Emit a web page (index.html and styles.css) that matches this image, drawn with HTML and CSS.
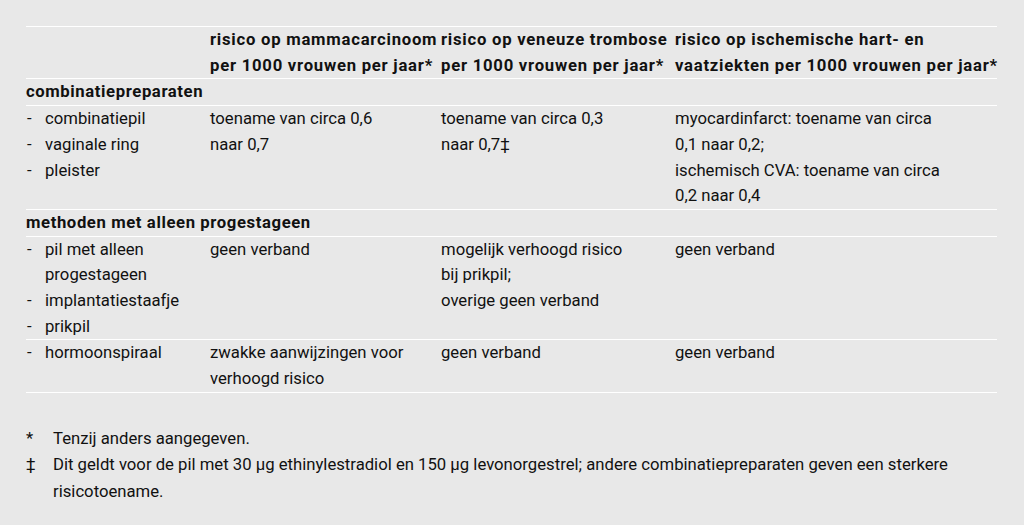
FILE: index.html
```html
<!DOCTYPE html>
<html lang="nl">
<head>
<meta charset="utf-8">
<title>Risico's hormonale anticonceptie</title>
<link rel="stylesheet" href="styles.css">
</head>
<body>
<div class="page">
  <table class="risk">
    <colgroup>
      <col class="c1"><col class="c2"><col class="c3"><col class="c4">
    </colgroup>
    <thead>
      <tr>
        <th></th>
        <th>risico op mammacarcinoom<br>per 1000 vrouwen per jaar*</th>
        <th>risico op veneuze trombose<br>per 1000 vrouwen per jaar*</th>
        <th>risico op ischemische hart- en<br>vaatziekten per 1000 vrouwen per jaar*</th>
      </tr>
    </thead>
    <tbody>
      <tr class="group"><td colspan="4">combinatiepreparaten</td></tr>
      <tr>
        <td>
          <ul class="items">
            <li>combinatiepil</li>
            <li>vaginale ring</li>
            <li>pleister</li>
          </ul>
        </td>
        <td>toename van circa 0,6<br>naar 0,7</td>
        <td>toename van circa 0,3<br>naar 0,7‡</td>
        <td>myocardinfarct: toename van circa<br>0,1 naar 0,2;<br>ischemisch CVA: toename van circa<br>0,2 naar 0,4</td>
      </tr>
      <tr class="group"><td colspan="4">methoden met alleen progestageen</td></tr>
      <tr>
        <td>
          <ul class="items">
            <li>pil met alleen<br>progestageen</li>
            <li>implantatiestaafje</li>
            <li>prikpil</li>
          </ul>
        </td>
        <td>geen verband</td>
        <td>mogelijk verhoogd risico<br>bij prikpil;<br>overige geen verband</td>
        <td>geen verband</td>
      </tr>
      <tr>
        <td>
          <ul class="items">
            <li>hormoonspiraal</li>
          </ul>
        </td>
        <td>zwakke aanwijzingen voor<br>verhoogd risico</td>
        <td>geen verband</td>
        <td>geen verband</td>
      </tr>
    </tbody>
  </table>
  <ul class="notes">
    <li><span class="mark">*</span><span>Tenzij anders aangegeven.</span></li>
    <li><span class="mark">‡</span><span>Dit geldt voor de pil met 30 µg ethinylestradiol en 150 µg levonorgestrel; andere combinatiepreparaten geven een sterkere risicotoename.</span></li>
  </ul>
</div>
</body>
</html>
```

FILE: styles.css
```css
html, body {
  margin: 0;
  padding: 0;
  background: #e8e8e8;
}
body {
  font-family: Roboto, "Liberation Sans", sans-serif;
  font-size: 16.7px;
  color: #111111;
}
.page {
  padding: 26px 26px 0 26px;
  width: 972px;
}
.risk {
  width: 971px;
  border-collapse: collapse;
  table-layout: fixed;
}
.c1 { width: 184px; }
.c2 { width: 231px; }
.c3 { width: 234px; }
.c4 { width: 322px; }
.risk th, .risk td {
  padding: 0;
  text-align: left;
  vertical-align: top;
  line-height: 25.7px;
  border-top: 1px solid #ffffff;
  border-bottom: 1px solid #ffffff;
  white-space: nowrap;
}
.risk th {
  font-weight: 700;
  letter-spacing: 0.75px;
}
.group td {
  font-weight: 700;
  letter-spacing: 0.6px;
}
.items {
  list-style: none;
  margin: 0;
  padding: 0;
}
.items li {
  position: relative;
  padding-left: 19px;
}
.items li::before {
  content: "-";
  position: absolute;
  left: 1px;
  top: 0;
}
.notes {
  list-style: none;
  margin: 33px 0 0 0;
  padding: 0;
  line-height: 26.5px;
  width: 972px;
}
.notes li {
  display: flex;
}
.notes .mark {
  flex: 0 0 27px;
}
```
